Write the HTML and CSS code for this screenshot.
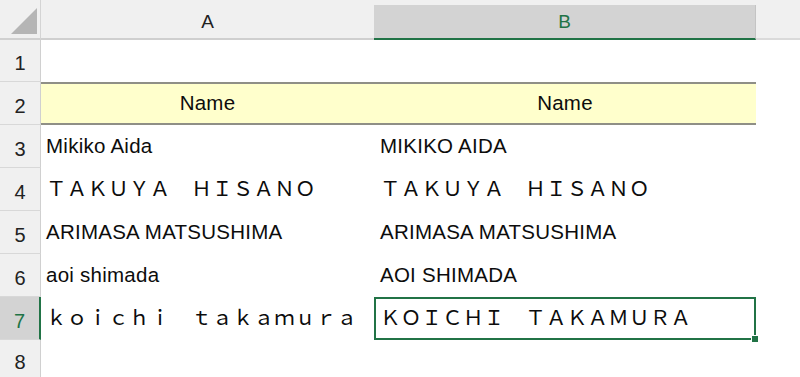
FILE: index.html
```html
<!DOCTYPE html>
<html lang="ja">
<head>
<meta charset="utf-8">
<link rel="stylesheet" href="styles.css">
</head>
<body>
<div class="sheet">
  <div class="colhead">
    <div class="corner">
      <svg class="tri" width="30" height="30" viewBox="0 0 30 30"><polygon points="2,28 28,28 28,2" fill="#b5b5b5"/></svg>
    </div>
    <div class="ch ch-a"><span>A</span></div>
    <div class="ch ch-b sel"><span>B</span></div>
    <div class="ch-rest"></div>
  </div>

  <div class="row r1">
    <div class="rh">1</div>
    <div class="cell ca"></div>
    <div class="cell cb"></div>
    <div class="rest"></div>
  </div>
  <div class="row r2 hdr">
    <div class="rh">2</div>
    <div class="cell ca center">Name</div>
    <div class="cell cb center">Name</div>
    <div class="rest"></div>
  </div>
  <div class="row">
    <div class="rh">3</div>
    <div class="cell ca">Mikiko Aida</div>
    <div class="cell cb">MIKIKO AIDA</div>
    <div class="rest"></div>
  </div>
  <div class="row">
    <div class="rh">4</div>
    <div class="cell ca">ＴＡＫＵＹＡ　ＨＩＳＡＮＯ</div>
    <div class="cell cb">ＴＡＫＵＹＡ　ＨＩＳＡＮＯ</div>
    <div class="rest"></div>
  </div>
  <div class="row">
    <div class="rh">5</div>
    <div class="cell ca">ARIMASA MATSUSHIMA</div>
    <div class="cell cb">ARIMASA MATSUSHIMA</div>
    <div class="rest"></div>
  </div>
  <div class="row">
    <div class="rh">6</div>
    <div class="cell ca">aoi shimada</div>
    <div class="cell cb">AOI SHIMADA</div>
    <div class="rest"></div>
  </div>
  <div class="row">
    <div class="rh sel">7</div>
    <div class="cell ca">ｋｏｉｃｈｉ　ｔａｋａｍｕｒａ</div>
    <div class="cell cb active">ＫＯＩＣＨＩ　ＴＡＫＡＭＵＲＡ<span class="handle"></span></div>
    <div class="rest"></div>
  </div>
  <div class="row r8">
    <div class="rh">8</div>
    <div class="cell ca"></div>
    <div class="cell cb"></div>
    <div class="rest"></div>
  </div>
</div>
</body>
</html>
```
FILE: styles.css
```css
html, body {
  margin: 0;
  padding: 0;
  background: #ffffff;
}
body {
  width: 800px;
  height: 377px;
  overflow: hidden;
  font-family: "Liberation Sans", "Noto Sans CJK JP", sans-serif;
  color: #111;
}
.sheet {
  display: flex;
  flex-direction: column;
}
.colhead {
  display: flex;
  height: 40px;
  background: #f0f0f0;
}
.corner {
  width: 41px;
  border-right: 1px solid #d4d4d4;
  border-bottom: 2px solid #d0d0d0;
  box-sizing: border-box;
  flex: none;
  display: flex;
  align-items: flex-end;
  justify-content: flex-end;
  padding: 0 1px 2px 0;
}
.tri { display: block; }
.ch {
  box-sizing: border-box;
  margin-top: 5px;
  height: 35px;
  border-bottom: 2px solid #cfcfcf;
  display: flex;
  align-items: center;
  justify-content: center;
  font-size: 19px;
  line-height: 22px;
  color: #222;
  flex: none;
}
.ch-a { width: 333px; }
.ch-b { width: 382px; }
.ch.sel {
  background: #d3d3d3;
  border-bottom-color: #217346;
  color: #217346;
  border-right: 1px solid #c4c4c4;
}
.ch-rest {
  flex: 1;
  border-bottom: 2px solid #dadada;
  box-sizing: border-box;
}
.row {
  display: flex;
  height: 43px;
}
.row.r1 { height: 42px; }
.row.r8 { height: 40px; }
.rh {
  width: 41px;
  flex: none;
  box-sizing: border-box;
  background: #f0f0f0;
  border-right: 1px solid #d0d0d0;
  border-bottom: 1px solid #d8d8d8;
  display: flex;
  align-items: center;
  justify-content: center;
  padding-top: 5px;
  font-size: 20px;
  line-height: 24px;
  color: #222;
}
.rh.sel {
  background: #d3d3d3;
  color: #217346;
  border-right: 2px solid #217346;
}
.cell {
  flex: none;
  box-sizing: border-box;
  display: flex;
  align-items: center;
  padding-left: 5px;
  padding-bottom: 2px;
  font-size: 20.5px;
  line-height: 24px;
  letter-spacing: 0.25px;
  white-space: nowrap;
  position: relative;
  color: #0c0c0c;
}
.ca { width: 333px; }
.cb { width: 382px; padding-left: 6px; }
.center { justify-content: center; padding-left: 0; }
.rest { flex: 1; }
.hdr .cell {
  background: #ffffcc;
  border-top: 2px solid #8f8f86;
  border-bottom: 2px solid #8f8f86;
}
.active {
  border: 2px solid #217346;
  padding-left: 4px;
}
.handle {
  position: absolute;
  right: -5px;
  bottom: -5px;
  width: 6px;
  height: 6px;
  background: #217346;
  border: 1px solid #ffffff;
}
```
